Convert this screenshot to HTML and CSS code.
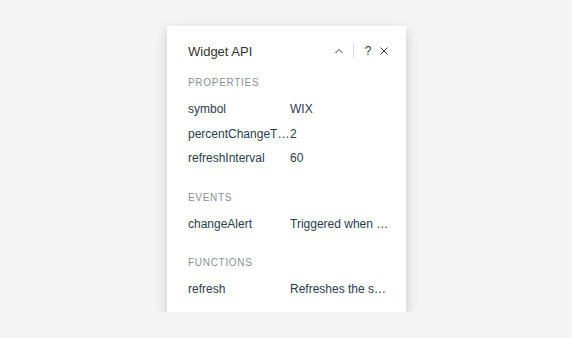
FILE: index.html
```html
<!DOCTYPE html>
<html lang="en">
<head>
  <meta charset="UTF-8">
  <title>Widget API</title>
  <link rel="stylesheet" href="styles.css">
</head>
<body>
  <div class="panel">
    <div class="panel-header">
      <span class="panel-title">Widget API</span>
      <div class="panel-actions">
        <svg class="icon" width="10" height="10" viewBox="0 0 10 10"><path d="M1.5 7 L5 3.5 L8.5 7" fill="none" stroke="#3a3a3a" stroke-width="1"/></svg>
        <span class="divider"></span>
        <span class="help">?</span>
        <svg class="icon" width="10" height="10" viewBox="0 0 10 10"><path d="M1.5 1.5 L8.5 8.5 M8.5 1.5 L1.5 8.5" fill="none" stroke="#3a3a3a" stroke-width="1"/></svg>
      </div>
    </div>

    <div class="section">
      <div class="section-title">Properties</div>
      <div class="row"><span class="key">symbol</span><span class="val">WIX</span></div>
      <div class="row"><span class="key">percentChangeThreshold</span><span class="val">2</span></div>
      <div class="row"><span class="key">refreshInterval</span><span class="val">60</span></div>
    </div>

    <div class="section">
      <div class="section-title">Events</div>
      <div class="row"><span class="key">changeAlert</span><span class="val">Triggered when the price changes</span></div>
    </div>

    <div class="section">
      <div class="section-title">Functions</div>
      <div class="row"><span class="key">refresh</span><span class="val">Refreshes the stock data</span></div>
    </div>
  </div>
</body>
</html>
```

FILE: styles.css
```css
body {
  margin: 0;
  background: #f4f4f4;
  font-family: 'Liberation Sans', Arial, sans-serif;
  color: #2b3a4a;
}
.panel {
  width: 239px;
  height: 286px;
  margin: 26px 0 0 167px;
  background: white;
  box-shadow: 0 5px 12px rgba(0,0,0,0.18);
  padding: 0 17px 0 21px;
  box-sizing: border-box;
}
.panel-header {
  display: flex;
  align-items: center;
  justify-content: space-between;
  height: 48px;
  padding-top: 1px;
}
.panel-title {
  font-size: 13px;
  color: #333;
}
.panel-actions {
  display: flex;
  align-items: center;
  gap: 6px;
}
.divider {
  width: 1px;
  height: 14px;
  background: #e0e0e0;
  margin: 0 3px;
}
.help {
  font-size: 12px;
  color: #333;
  width: 10px;
  text-align: center;
}
.section {
  padding-bottom: 19px;
}
.section-title {
  font-size: 10px;
  text-transform: uppercase;
  letter-spacing: 0.7px;
  color: #8b9098;
  height: 16px;
  line-height: 16px;
  margin-bottom: 6px;
}
.row {
  display: flex;
  font-size: 12px;
  height: 24.5px;
  line-height: 24px;
  color: #2b3c4e;
}
.key {
  width: 102px;
  flex: none;
  white-space: nowrap;
  overflow: hidden;
  text-overflow: ellipsis;
}
.val {
  flex: 1;
  min-width: 0;
  white-space: nowrap;
  overflow: hidden;
  text-overflow: ellipsis;
}
```
